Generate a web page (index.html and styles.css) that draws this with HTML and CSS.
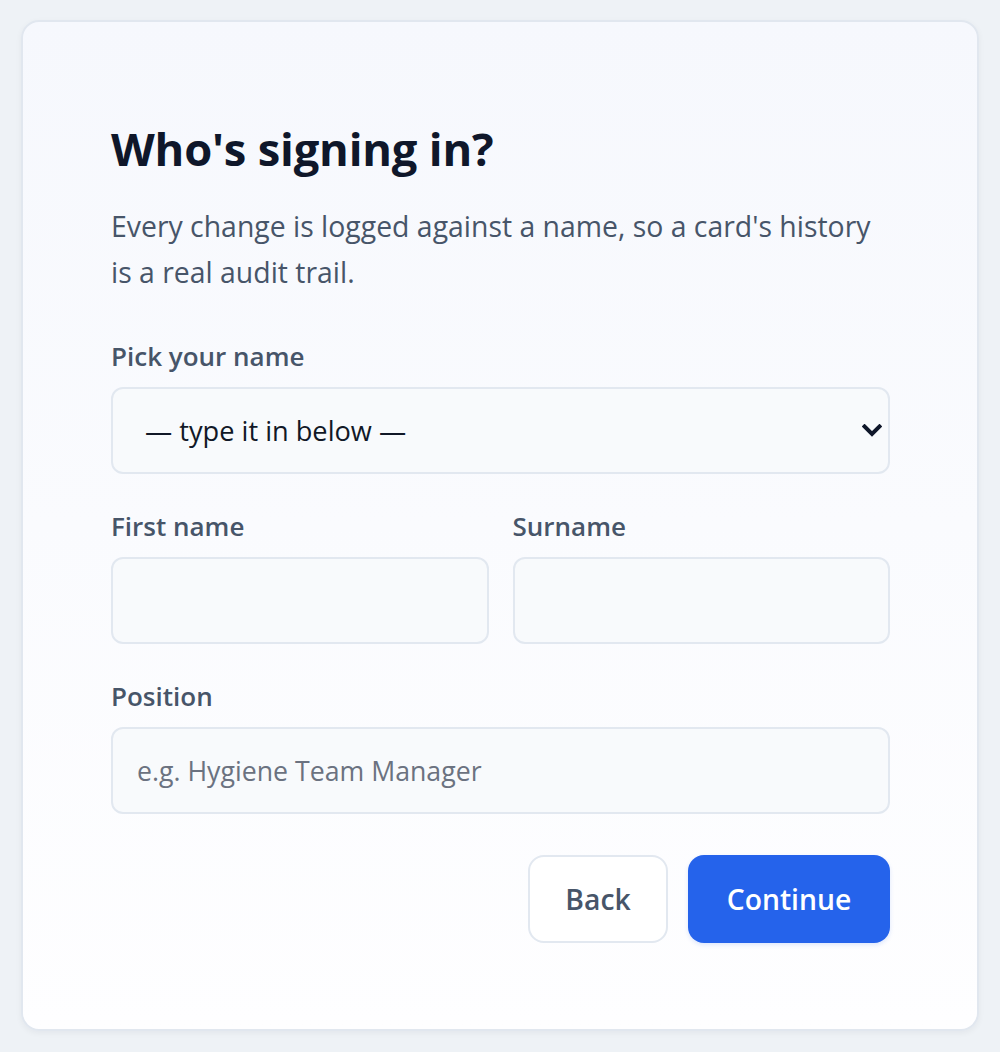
FILE: index.html
```html
<!DOCTYPE html>
<html lang="en">
<head>
<meta charset="utf-8">
<title>Who's signing in?</title>
<link rel="stylesheet" href="styles.css">
</head>
<body>
<main class="card">
  <h1 class="title">Who's signing in?</h1>
  <p class="lead">Every change is logged against a name, so a card's history is a real audit trail.</p>
  <form class="form">
    <div class="field">
      <label class="label" for="pick">Pick your name</label>
      <div class="select-wrap">
        <select id="pick" class="control select">
          <option>— type it in below —</option>
        </select>
        <svg class="chevron" width="20" height="14" viewBox="0 0 20 14" aria-hidden="true">
          <path d="M2.5 2.5 L10 10 L17.5 2.5" fill="none" stroke="#0f172a" stroke-width="4" stroke-linecap="square"/>
        </svg>
      </div>
    </div>
    <div class="row">
      <div class="field">
        <label class="label" for="first">First name</label>
        <input id="first" class="control" type="text">
      </div>
      <div class="field">
        <label class="label" for="last">Surname</label>
        <input id="last" class="control" type="text">
      </div>
    </div>
    <div class="field">
      <label class="label" for="pos">Position</label>
      <input id="pos" class="control" type="text" placeholder="e.g. Hygiene Team Manager">
    </div>
    <div class="actions">
      <button type="button" class="btn btn-ghost">Back</button>
      <button type="button" class="btn btn-primary">Continue</button>
    </div>
  </form>
</main>
</body>
</html>
```
FILE: styles.css
```css
* { box-sizing: border-box; }

html, body {
  margin: 0;
  padding: 0;
}

body {
  background: #eef2f6;
  font-family: "Open Sans", "Noto Sans", sans-serif;
  padding: 20px 21px;
  min-height: 1052px;
}

.card {
  background: linear-gradient(180deg, #f6f8fd 0%, #fefeff 100%);
  border: 2px solid #e1e7ef;
  border-radius: 18px;
  box-shadow: 0 2px 6px rgba(15, 23, 42, 0.05);
  padding: 86px 87px 87px 88px;
  height: 1011px;
}

.title {
  margin: 16px 0 0;
  font-size: 45.3px;
  line-height: 50px;
  font-weight: 700;
  color: #0f172a;
  letter-spacing: -0.2px;
}

.lead {
  margin: 29px 0 0;
  font-size: 28.4px;
  line-height: 46px;
  color: #475569;
}

.form {
  margin-top: 44px;
  display: flex;
  flex-direction: column;
  gap: 35px;
}

.field {
  display: flex;
  flex-direction: column;
  gap: 14px;
  min-width: 0;
}

.label {
  font-size: 26px;
  line-height: 34px;
  font-weight: 600;
  color: #475569;
}

.row {
  display: grid;
  grid-template-columns: 1fr 1fr;
  gap: 24px;
}

.control {
  display: block;
  width: 100%;
  height: 87px;
  background: #f8fafc;
  border: 2px solid #e2e8f0;
  border-radius: 12px;
  padding: 0 24px;
  font-family: inherit;
  font-size: 26.7px;
  color: #0f172a;
  outline: none;
}

.control::placeholder {
  color: #6b7280;
}

.select-wrap {
  position: relative;
}

.select {
  appearance: none;
  -webkit-appearance: none;
  padding-left: 32px;
  padding-right: 48px;
  font-size: 27.2px;
  color: #111827;
}

.chevron {
  position: absolute;
  right: 8px;
  top: 37px;
  pointer-events: none;
}

.actions {
  display: flex;
  justify-content: flex-end;
  gap: 20px;
  margin-top: 6px;
}

.btn {
  height: 88px;
  border-radius: 16px;
  font-family: inherit;
  font-size: 28.3px;
  font-weight: 600;
  cursor: pointer;
}

.btn-ghost {
  width: 140px;
  background: #ffffff;
  border: 2px solid #e2e8f0;
  color: #475569;
}

.btn-primary {
  width: 202px;
  background: #2563eb;
  border: none;
  color: #ffffff;
  box-shadow: 0 2px 4px rgba(37, 99, 235, 0.15);
}
```
